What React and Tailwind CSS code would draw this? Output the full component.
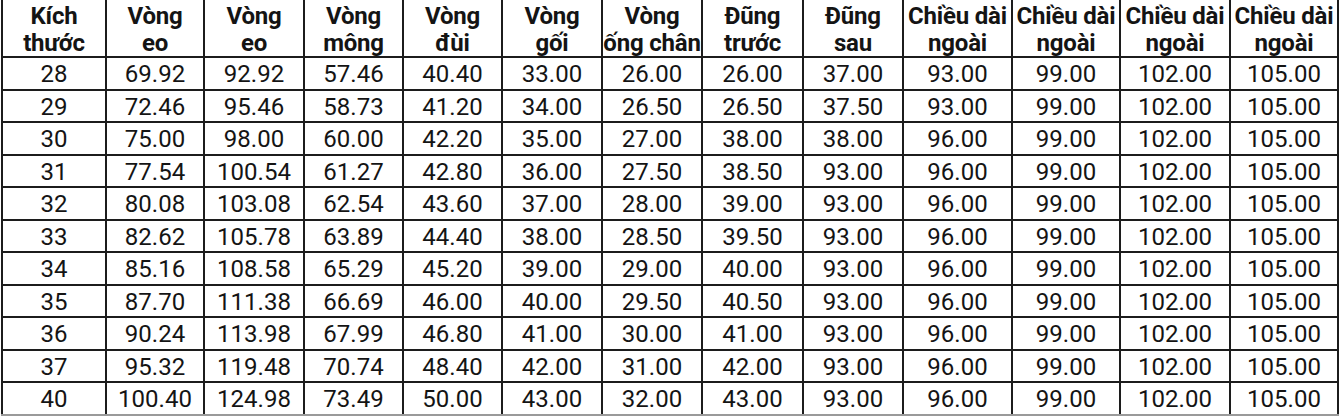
const COLS = [104, 98, 100, 99, 99, 100, 100, 101, 100, 109, 108, 110, 108]

const HEAD = [
  ['Kích', 'thước'],
  ['Vòng', 'eo'],
  ['Vòng', 'eo'],
  ['Vòng', 'mông'],
  ['Vòng', 'đùi'],
  ['Vòng', 'gối'],
  ['Vòng', 'ống chân'],
  ['Đũng', 'trước'],
  ['Đũng', 'sau'],
  ['Chiều dài', 'ngoài'],
  ['Chiều dài', 'ngoài'],
  ['Chiều dài', 'ngoài'],
  ['Chiều dài', 'ngoài'],
]

const ROWS = [
  ['28', '69.92', '92.92', '57.46', '40.40', '33.00', '26.00', '26.00', '37.00', '93.00', '99.00', '102.00', '105.00'],
  ['29', '72.46', '95.46', '58.73', '41.20', '34.00', '26.50', '26.50', '37.50', '93.00', '99.00', '102.00', '105.00'],
  ['30', '75.00', '98.00', '60.00', '42.20', '35.00', '27.00', '38.00', '38.00', '96.00', '99.00', '102.00', '105.00'],
  ['31', '77.54', '100.54', '61.27', '42.80', '36.00', '27.50', '38.50', '93.00', '96.00', '99.00', '102.00', '105.00'],
  ['32', '80.08', '103.08', '62.54', '43.60', '37.00', '28.00', '39.00', '93.00', '96.00', '99.00', '102.00', '105.00'],
  ['33', '82.62', '105.78', '63.89', '44.40', '38.00', '28.50', '39.50', '93.00', '96.00', '99.00', '102.00', '105.00'],
  ['34', '85.16', '108.58', '65.29', '45.20', '39.00', '29.00', '40.00', '93.00', '96.00', '99.00', '102.00', '105.00'],
  ['35', '87.70', '111.38', '66.69', '46.00', '40.00', '29.50', '40.50', '93.00', '96.00', '99.00', '102.00', '105.00'],
  ['36', '90.24', '113.98', '67.99', '46.80', '41.00', '30.00', '41.00', '93.00', '96.00', '99.00', '102.00', '105.00'],
  ['37', '95.32', '119.48', '70.74', '48.40', '42.00', '31.00', '42.00', '93.00', '96.00', '99.00', '102.00', '105.00'],
  ['40', '100.40', '124.98', '73.49', '50.00', '43.00', '32.00', '43.00', '93.00', '96.00', '99.00', '102.00', '105.00'],
]

function Cell({ w, last, children, className }) {
  return (
    <div
      className={`shrink-0 border-l-2 border-[#1c1c1c] ${last ? 'border-r-2' : ''} flex flex-col items-center justify-center whitespace-nowrap overflow-visible ${className}`}
      style={{ width: w + (last ? 2 : 0) }}
    >
      {children}
    </div>
  )
}

export default function App() {
  return (
    <div className="w-[1340px] h-[416px] bg-white overflow-hidden text-[#141414] font-['Roboto','Liberation_Sans',sans-serif]">
      <div className="ml-px w-[1338px]">
        {/* header */}
        <div className="flex h-[58px] border-b-2 border-[#1c1c1c]">
          {HEAD.map((h, i) => (
            <Cell key={i} w={COLS[i]} last={i === COLS.length - 1} className="pt-[3px] text-[24px] leading-[27px] font-bold tracking-[-0.2px]">
              <span>{h[0]}</span>
              <span>{h[1]}</span>
            </Cell>
          ))}
        </div>

        {/* data rows */}
        {ROWS.map((r, ri) => (
          <div
            key={ri}
            className={`flex h-[32.5px] border-b-2 ${ri === ROWS.length - 1 ? 'border-[#9a9a9a]' : 'border-[#1c1c1c]'}`}
          >
            {r.map((v, i) => (
              <Cell key={i} w={COLS[i]} last={i === COLS.length - 1} className="pt-[2px] text-[24px] leading-[28px]">
                {v}
              </Cell>
            ))}
          </div>
        ))}
      </div>
    </div>
  )
}
